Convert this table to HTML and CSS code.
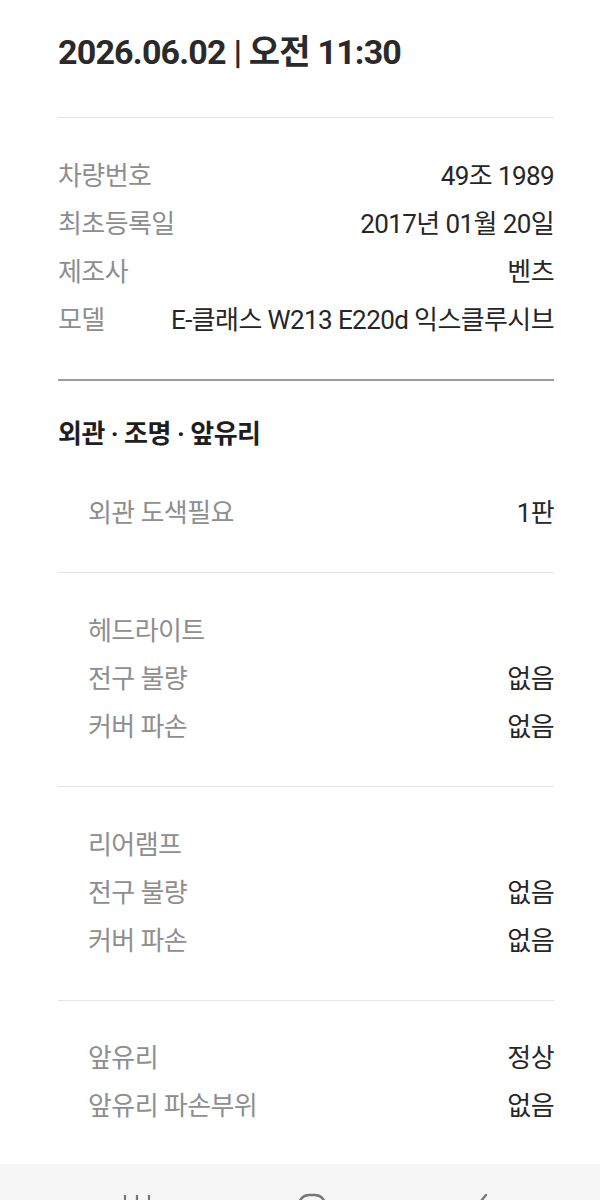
FILE: index.html
```html
<!DOCTYPE html>
<html lang="ko">
<head>
<meta charset="utf-8">
<title>차량 점검</title>
<link rel="stylesheet" href="styles.css">
</head>
<body>
<main class="page">
  <h1 class="title">2026.06.02 | 오전 11:30</h1>
  <div class="rule"></div>

  <section class="group info">
    <div class="row"><span class="label">차량번호</span><span class="value">49조 1989</span></div>
    <div class="row"><span class="label">최초등록일</span><span class="value">2017년 01월 20일</span></div>
    <div class="row"><span class="label">제조사</span><span class="value">벤츠</span></div>
    <div class="row"><span class="label">모델</span><span class="value">E-클래스 W213 E220d 익스클루시브</span></div>
  </section>
  <div class="rule dark"></div>

  <h2 class="section-title">외관 · 조명 · 앞유리</h2>

  <section class="group sub first">
    <div class="row"><span class="label">외관 도색필요</span><span class="value">1판</span></div>
  </section>
  <div class="rule"></div>

  <section class="group sub">
    <div class="row"><span class="label">헤드라이트</span></div>
    <div class="row"><span class="label">전구 불량</span><span class="value">없음</span></div>
    <div class="row"><span class="label">커버 파손</span><span class="value">없음</span></div>
  </section>
  <div class="rule"></div>

  <section class="group sub">
    <div class="row"><span class="label">리어램프</span></div>
    <div class="row"><span class="label">전구 불량</span><span class="value">없음</span></div>
    <div class="row"><span class="label">커버 파손</span><span class="value">없음</span></div>
  </section>
  <div class="rule"></div>

  <section class="group sub last">
    <div class="row"><span class="label">앞유리</span><span class="value">정상</span></div>
    <div class="row"><span class="label">앞유리 파손부위</span><span class="value">없음</span></div>
  </section>
</main>

<nav class="navbar">
  <svg class="nav-icon" width="30" height="26" viewBox="0 0 30 26">
    <g fill="none" stroke="#777" stroke-width="2.2">
      <path d="M4 2V24"/>
      <path d="M16 2V24"/>
      <path d="M28 2V24"/>
    </g>
  </svg>
  <svg class="nav-icon" width="30" height="30" viewBox="0 0 30 30">
    <rect x="2" y="2" width="26" height="26" rx="10" fill="none" stroke="#777" stroke-width="2.4"/>
  </svg>
  <svg class="nav-icon" width="20" height="30" viewBox="0 0 20 30">
    <path d="M14 2L4 14L14 26" fill="none" stroke="#777" stroke-width="2.4" stroke-linecap="round" stroke-linejoin="round"/>
  </svg>
</nav>
</body>
</html>
```

FILE: styles.css
```css
* {
  box-sizing: border-box;
}

html, body {
  margin: 0;
  padding: 0;
  background: #ffffff;
}

body {
  font-family: Roboto, "Noto Sans CJK KR", "Noto Sans", sans-serif;
  color: #222222;
}

.page {
  padding: 0 46px 0 58px;
}

.title {
  margin: 0;
  padding: 32px 0 45px;
  font-size: 34px;
  line-height: 40px;
  font-weight: 700;
  color: #2a2a2a;
  letter-spacing: -0.8px;
}

.rule {
  height: 1px;
  background: #e3e3e3;
}

.rule.dark {
  height: 2px;
  background: #9c9c9c;
}

.group {
  padding: 34px 0 35px;
}

.sub {
  padding-left: 30px;
}

.sub.first {
  padding-top: 35px;
  padding-bottom: 35px;
}

.sub.last {
  padding-top: 33px;
  padding-bottom: 34px;
}

.row {
  display: flex;
  justify-content: space-between;
  align-items: center;
  height: 48px;
  font-size: 26px;
  line-height: 48px;
  letter-spacing: -0.6px;
}

.label {
  color: #8e8e8e;
}

.value {
  color: #262626;
}

.section-title {
  margin: 0;
  padding-top: 33px;
  font-size: 26px;
  line-height: 40px;
  font-weight: 700;
  color: #1e1e1e;
  letter-spacing: -0.5px;
}

.navbar {
  height: 90px;
  background: #f6f6f6;
  display: flex;
  justify-content: space-between;
  align-items: flex-start;
  padding: 29px 108px 0 121px;
}

.nav-icon {
  display: block;
}
```
